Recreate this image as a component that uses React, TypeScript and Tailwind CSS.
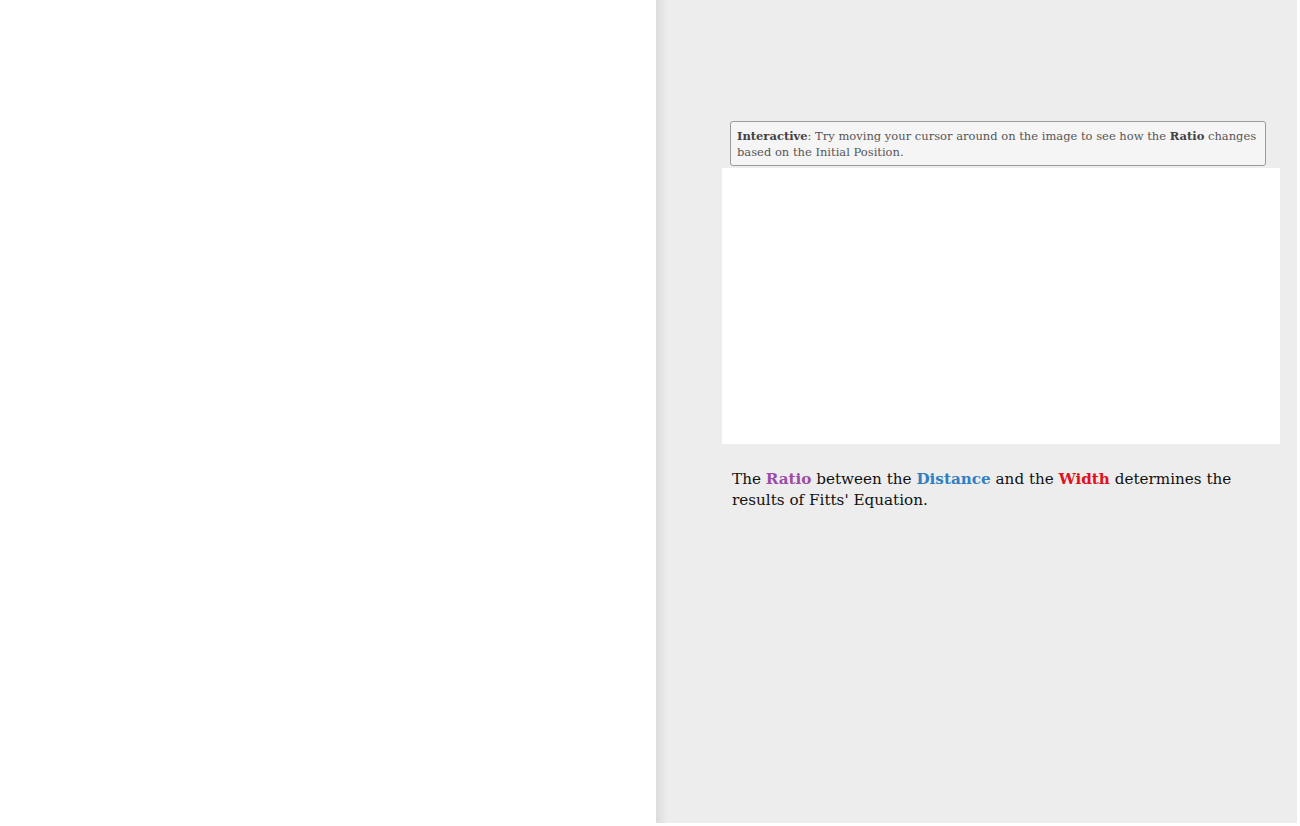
import React from "react";

const serif = { fontFamily: '"DejaVu Serif", "Liberation Serif", serif' };

export default function App() {
  return (
    <div className="flex h-[826px] w-[1300px] bg-white" style={serif}>
      <div className="w-[656px] h-[823px] bg-white" />
      <div className="relative w-[641px] h-[823px] bg-[#ededed]">
        <div className="absolute left-0 top-0 h-full w-[12px] bg-gradient-to-r from-[#dcdcdc] to-[#ededed]" />
        <div className="relative pt-[121px] pl-[66px] w-[624px]">
          <div className="ml-[8px] mr-[14px] rounded-[3px] border border-[#9a9a9a] bg-[#f5f5f5] px-[6px] pt-[6px] pb-[5px] text-[11.5px] leading-[16px] text-[#555]">
            <b className="text-[#444]">Interactive</b>: Try moving your cursor around on the image to see how the{" "}
            <b className="text-[#444]">Ratio</b> changes based on the Initial Position.
          </div>
          <div className="mt-[2px] h-[276px] bg-white" />
          <p className="mt-[25px] pl-[10px] pr-[40px] text-[15.2px] leading-[21px] text-[#111]">
            The <b className="text-[#9b4ea8]">Ratio</b> between the{" "}
            <b className="text-[#2f7fc1]">Distance</b> and the{" "}
            <b className="text-[#e3111b]">Width</b> determines the results of Fitts' Equation.
          </p>
        </div>
      </div>
    </div>
  );
}
